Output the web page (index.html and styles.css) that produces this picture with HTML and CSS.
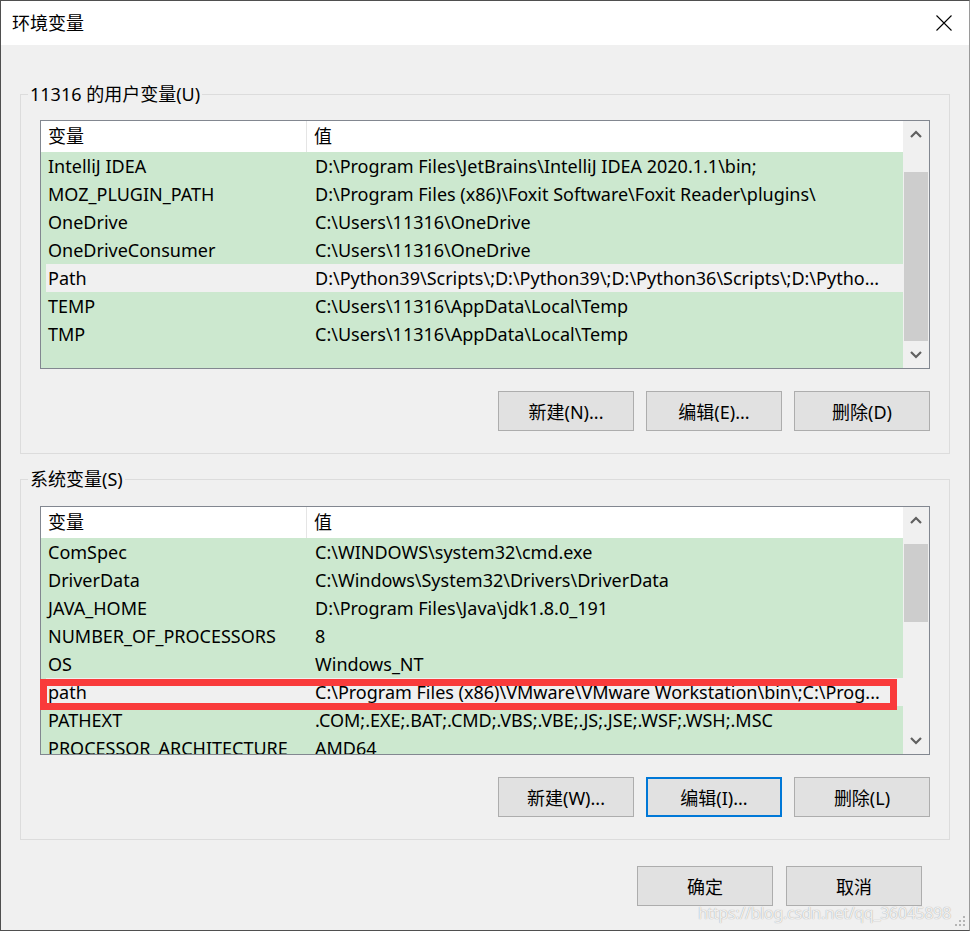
FILE: index.html
```html
<!DOCTYPE html>
<html lang="zh-CN">
<head>
    <meta charset="UTF-8">
    <title>环境变量</title>
    <link rel="stylesheet" href="styles.css">
</head>
<body>

<div class="window">
    <div class="titlebar">
        <span class="title">环境变量</span>
        <svg class="close" width="16" height="16" viewBox="0 0 16 16">
            <path d="M0.5 0.5 L15.5 15.5 M15.5 0.5 L0.5 15.5" stroke="#000" stroke-width="1.1" fill="none"/>
        </svg>
    </div>

    <div class="dialog-body">
        <!-- 用户变量 -->
        <fieldset class="group">
            <legend>11316 的用户变量(U)</legend>
            <div class="list">
                <div class="list-main">
                    <div class="list-head">
                        <div class="col-name">变量</div>
                        <div class="col-value">值</div>
                    </div>
                    <div class="row"><div class="col-name">IntelliJ IDEA</div><div class="col-value">D:\Program Files\JetBrains\IntelliJ IDEA 2020.1.1\bin;</div></div>
                    <div class="row"><div class="col-name">MOZ_PLUGIN_PATH</div><div class="col-value">D:\Program Files (x86)\Foxit Software\Foxit Reader\plugins\</div></div>
                    <div class="row"><div class="col-name">OneDrive</div><div class="col-value">C:\Users\11316\OneDrive</div></div>
                    <div class="row"><div class="col-name">OneDriveConsumer</div><div class="col-value">C:\Users\11316\OneDrive</div></div>
                    <div class="row selected"><div class="col-name">Path</div><div class="col-value">D:\Python39\Scripts\;D:\Python39\;D:\Python36\Scripts\;D:\Pytho...</div></div>
                    <div class="row"><div class="col-name">TEMP</div><div class="col-value">C:\Users\11316\AppData\Local\Temp</div></div>
                    <div class="row"><div class="col-name">TMP</div><div class="col-value">C:\Users\11316\AppData\Local\Temp</div></div>
                </div>
                <div class="scrollbar">
                    <div class="arrow">
                        <svg width="12" height="8" viewBox="0 0 12 8"><polyline points="1,7 6,2 11,7" stroke="#606060" stroke-width="2.2" fill="none"/></svg>
                    </div>
                    <div class="track">
                        <div class="thumb" style="margin-top:25px;height:169px"></div>
                    </div>
                    <div class="arrow">
                        <svg width="12" height="8" viewBox="0 0 12 8"><polyline points="1,1 6,6 11,1" stroke="#606060" stroke-width="2.2" fill="none"/></svg>
                    </div>
                </div>
            </div>
            <div class="btn-row">
                <button class="btn">新建(N)...</button>
                <button class="btn">编辑(E)...</button>
                <button class="btn">删除(D)</button>
            </div>
        </fieldset>

        <!-- 系统变量 -->
        <fieldset class="group system">
            <legend>系统变量(S)</legend>
            <div class="list">
                <div class="list-main">
                    <div class="list-head">
                        <div class="col-name">变量</div>
                        <div class="col-value">值</div>
                    </div>
                    <div class="row"><div class="col-name">ComSpec</div><div class="col-value">C:\WINDOWS\system32\cmd.exe</div></div>
                    <div class="row"><div class="col-name">DriverData</div><div class="col-value">C:\Windows\System32\Drivers\DriverData</div></div>
                    <div class="row"><div class="col-name">JAVA_HOME</div><div class="col-value">D:\Program Files\Java\jdk1.8.0_191</div></div>
                    <div class="row"><div class="col-name">NUMBER_OF_PROCESSORS</div><div class="col-value">8</div></div>
                    <div class="row"><div class="col-name">OS</div><div class="col-value">Windows_NT</div></div>
                    <div class="row selected"><div class="col-name">path</div><div class="col-value">C:\Program Files (x86)\VMware\VMware Workstation\bin\;C:\Prog...</div></div>
                    <div class="row"><div class="col-name">PATHEXT</div><div class="col-value">.COM;.EXE;.BAT;.CMD;.VBS;.VBE;.JS;.JSE;.WSF;.WSH;.MSC</div></div>
                    <div class="row"><div class="col-name">PROCESSOR_ARCHITECTURE</div><div class="col-value">AMD64</div></div>
                </div>
                <div class="scrollbar">
                    <div class="arrow">
                        <svg width="12" height="8" viewBox="0 0 12 8"><polyline points="1,7 6,2 11,7" stroke="#606060" stroke-width="2.2" fill="none"/></svg>
                    </div>
                    <div class="track">
                        <div class="thumb" style="margin-top:11px;height:78px"></div>
                    </div>
                    <div class="arrow">
                        <svg width="12" height="8" viewBox="0 0 12 8"><polyline points="1,1 6,6 11,1" stroke="#606060" stroke-width="2.2" fill="none"/></svg>
                    </div>
                </div>
                <!-- 标注框 -->
                <div class="mark"></div>
            </div>
            <div class="btn-row">
                <button class="btn">新建(W)...</button>
                <button class="btn focused">编辑(I)...</button>
                <button class="btn">删除(L)</button>
            </div>
        </fieldset>

        <div class="footer">
            <button class="btn">确定</button>
            <button class="btn">取消</button>
        </div>
    </div>

    <div class="watermark">https://blog.csdn.net/qq_36045898</div>
    <svg class="grip" width="12" height="12" viewBox="0 0 12 12">
        <rect x="9" y="1" width="2" height="2" fill="#b5b5b5"/>
        <rect x="5" y="5" width="2" height="2" fill="#b5b5b5"/>
        <rect x="9" y="5" width="2" height="2" fill="#b5b5b5"/>
        <rect x="1" y="9" width="2" height="2" fill="#b5b5b5"/>
        <rect x="5" y="9" width="2" height="2" fill="#b5b5b5"/>
        <rect x="9" y="9" width="2" height="2" fill="#b5b5b5"/>
    </svg>
</div>

</body>
</html>
```

FILE: styles.css
```css
body {
    margin: 0;
    background-color: #f0f0f0;
    font-family: "Noto Sans", "Noto Sans CJK SC", sans-serif;
    font-size: 18px;
    color: #000;
}
.window {
    position: relative;
    width: 970px;
    height: 931px;
    box-sizing: border-box;
    border: 1px solid #4f4f4f;
    border-right-color: #9a9a9a;
    background-color: #f0f0f0;
    overflow: hidden;
}
.titlebar {
    height: 44px;
    background-color: #fff;
    display: flex;
    align-items: center;
    justify-content: space-between;
    padding: 0 17px 0 11px;
}
.title {
    font-size: 18px;
    line-height: 24px;
}
.dialog-body {
    padding: 37px 19px 0 19px;
}
.group {
    margin: 0;
    border: 1px solid #dcdcdc;
    padding: 14px 19px 22px 19px;
}
.group legend {
    margin-left: -12px;
    padding: 0 2px;
    line-height: 24px;
    font-size: 18px;
}
.group.system {
    margin-top: 13px;
    padding-top: 15px;
}
.list {
    position: relative;
    display: flex;
    height: 249px;
    box-sizing: border-box;
    border: 1px solid #828790;
    background-color: #cce8cf;
}
.list-main {
    flex: 1;
    overflow: hidden;
}
.list-head {
    display: flex;
    height: 31px;
    line-height: 31px;
    background-color: #fff;
}
.list-head .col-name {
    width: 266px;
    box-sizing: border-box;
    padding-left: 7px;
    border-right: 1px solid #e5e5e5;
}
.list-head .col-value {
    padding-left: 7px;
}
.row {
    display: flex;
    height: 28px;
    line-height: 28px;
    margin-left: 5px;
    white-space: nowrap;
}
.row.selected {
    background-color: #f0f0f0;
}
.row .col-name {
    width: 261px;
    flex-shrink: 0;
    box-sizing: border-box;
    padding-left: 2px;
}
.row .col-value {
    padding-left: 8px;
    overflow: hidden;
}
.scrollbar {
    width: 26px;
    display: flex;
    flex-direction: column;
    background-color: #f0f0f0;
}
.arrow {
    height: 26px;
    display: flex;
    align-items: center;
    justify-content: center;
}
.track {
    flex: 1;
    display: flex;
    flex-direction: column;
    align-items: center;
}
.thumb {
    width: 24px;
    background-color: #cdcdcd;
}
.mark {
    position: absolute;
    left: -1px;
    top: 172px;
    width: 857px;
    height: 31px;
    box-sizing: border-box;
    border: 7px solid #f93b3b;
}
.btn-row {
    display: flex;
    justify-content: flex-end;
    gap: 12px;
    margin-top: 22px;
}
.btn {
    width: 136px;
    height: 40px;
    box-sizing: border-box;
    background-color: #e1e1e1;
    border: 1px solid #adadad;
    font-family: "Noto Sans", "Noto Sans CJK SC", sans-serif;
    font-size: 18px;
    color: #000;
    padding: 0;
}
.btn.focused {
    border: 2px solid #0078d7;
}
.footer {
    display: flex;
    justify-content: flex-end;
    gap: 13px;
    margin-top: 26px;
    padding-right: 28px;
}
.watermark {
    position: absolute;
    left: 697px;
    top: 900px;
    font-size: 16px;
    letter-spacing: -0.3px;
    line-height: 24px;
    color: rgba(255, 255, 255, 0.85);
    text-shadow: 0 0 1px rgba(0, 0, 0, 0.4);
    white-space: nowrap;
}
.grip {
    position: absolute;
    right: 3px;
    bottom: 3px;
}
```
